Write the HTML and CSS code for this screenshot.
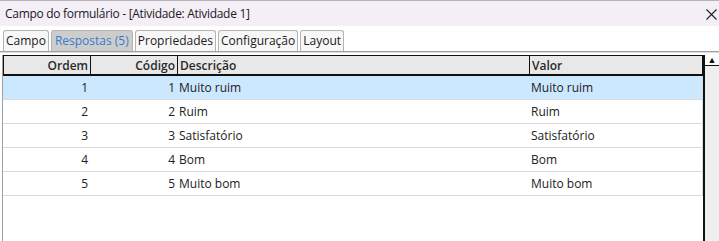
FILE: index.html
```html
<!DOCTYPE html>
<html lang="pt">
<head>
<meta charset="utf-8">
<title>Campo do formulário</title>
<link rel="stylesheet" href="styles.css">
</head>
<body>
<div class="window">
  <div class="titlebar">
    <span class="title">Campo do formulário - [Atividade: Atividade 1]</span>
    <svg class="close" width="11" height="11" viewBox="0 0 11 11"><path d="M0.5 0.5 L10.5 10.5 M10.5 0.5 L0.5 10.5" stroke="#222" stroke-width="1.1" fill="none"/></svg>
  </div>
  <div class="tabstrip">
    <div class="tab">Campo</div>
    <div class="tab active">Respostas (5)</div>
    <div class="tab">Propriedades</div>
    <div class="tab">Configuração</div>
    <div class="tab">Layout</div>
  </div>
  <div class="gap"></div>
  <div class="gridarea">
    <div class="grid">
      <div class="row head">
        <div class="c ordem">Ordem</div>
        <div class="c codigo">Código</div>
        <div class="c desc">Descrição</div>
        <div class="c valor">Valor</div>
      </div>
      <div class="row sel">
        <div class="c ordem">1</div>
        <div class="c codigo">1</div>
        <div class="c desc">Muito ruim</div>
        <div class="c valor">Muito ruim</div>
      </div>
      <div class="row">
        <div class="c ordem">2</div>
        <div class="c codigo">2</div>
        <div class="c desc">Ruim</div>
        <div class="c valor">Ruim</div>
      </div>
      <div class="row">
        <div class="c ordem">3</div>
        <div class="c codigo">3</div>
        <div class="c desc">Satisfatório</div>
        <div class="c valor">Satisfatório</div>
      </div>
      <div class="row">
        <div class="c ordem">4</div>
        <div class="c codigo">4</div>
        <div class="c desc">Bom</div>
        <div class="c valor">Bom</div>
      </div>
      <div class="row">
        <div class="c ordem">5</div>
        <div class="c codigo">5</div>
        <div class="c desc">Muito bom</div>
        <div class="c valor">Muito bom</div>
      </div>
    </div>
    <div class="scrollbar">
      <div class="up">&#9650;</div>
      <div class="track"></div>
    </div>
  </div>
</div>
</body>
</html>
```
FILE: styles.css
```css
html, body {
  margin: 0;
  padding: 0;
  background: #ffffff;
}
body {
  width: 719px;
  height: 241px;
  overflow: hidden;
  font-family: "Open Sans", "Noto Sans", sans-serif;
  font-size: 12px;
  color: #222;
}
.window {
  display: flex;
  flex-direction: column;
  height: 241px;
}
.titlebar {
  border-top: 1px solid #b4b4b4;
  background: #f4eef7;
  height: 25px;
  display: flex;
  align-items: center;
  justify-content: space-between;
  padding: 0 2px 0 5px;
  flex: none;
}
.title {
  font-size: 12px;
  color: #1a1a1a;
  letter-spacing: -0.3px;
}
.close {
  margin-top: 2px;
}
.tabstrip {
  flex: none;
  height: 26px;
  display: flex;
  align-items: flex-end;
  gap: 2px;
  padding-left: 3px;
  border-bottom: 1px solid #a0a0a0;
  box-sizing: border-box;
}
.tab {
  height: 21px;
  box-sizing: border-box;
  border: 1px solid #b4b4b4;
  border-bottom: none;
  border-radius: 3px 3px 0 0;
  background: #f7f7f7;
  padding: 0 2px;
  line-height: 20px;
  font-size: 12px;
  color: #1a1a1a;
}
.tab.active {
  background: #cdcdcd;
  color: #3a7bc8;
  padding: 0 3px;
}
.gap {
  flex: none;
  height: 3px;
  border-top: 1px solid #dcdcdc;
  box-sizing: border-box;
}
.gridarea {
  flex: 1;
  display: flex;
  padding-left: 2px;
}
.grid {
  width: 700px;
  border-left: 1px solid #a0a0a0;
  flex: none;
}
.row {
  display: grid;
  grid-template-columns: 87px 87px 352px 174px;
  height: 24px;
  border-bottom: 1px solid #dadada;
  box-sizing: border-box;
  border-right: 1px solid #dadada;
}
.row.head {
  height: 21px;
  background: #e8e8e8;
  border: 1px solid #111;
  border-bottom: 2px solid #111;
  font-weight: 600;
  color: #2a2a2a;
}
.row.head .c {
  line-height: 19px;
  border-right: 1px solid #111;
}
.row.head .c.valor {
  border-right: none;
}
.row.sel {
  background: #cce8ff;
}
.c {
  line-height: 24px;
  white-space: nowrap;
  overflow: hidden;
  padding: 0 2px;
}
.ordem, .codigo {
  text-align: right;
}
.desc, .valor {
  text-align: left;
}
.scrollbar {
  flex: 1;
  display: flex;
  flex-direction: column;
  border-left: 2px solid #111;
  background: #efefef;
}
.up {
  height: 10px;
  font-size: 9px;
  line-height: 10px;
  text-align: center;
  background: #ffffff;
  border-bottom: 1px solid #111;
  color: #111;
}
.track {
  flex: 1;
}
```
